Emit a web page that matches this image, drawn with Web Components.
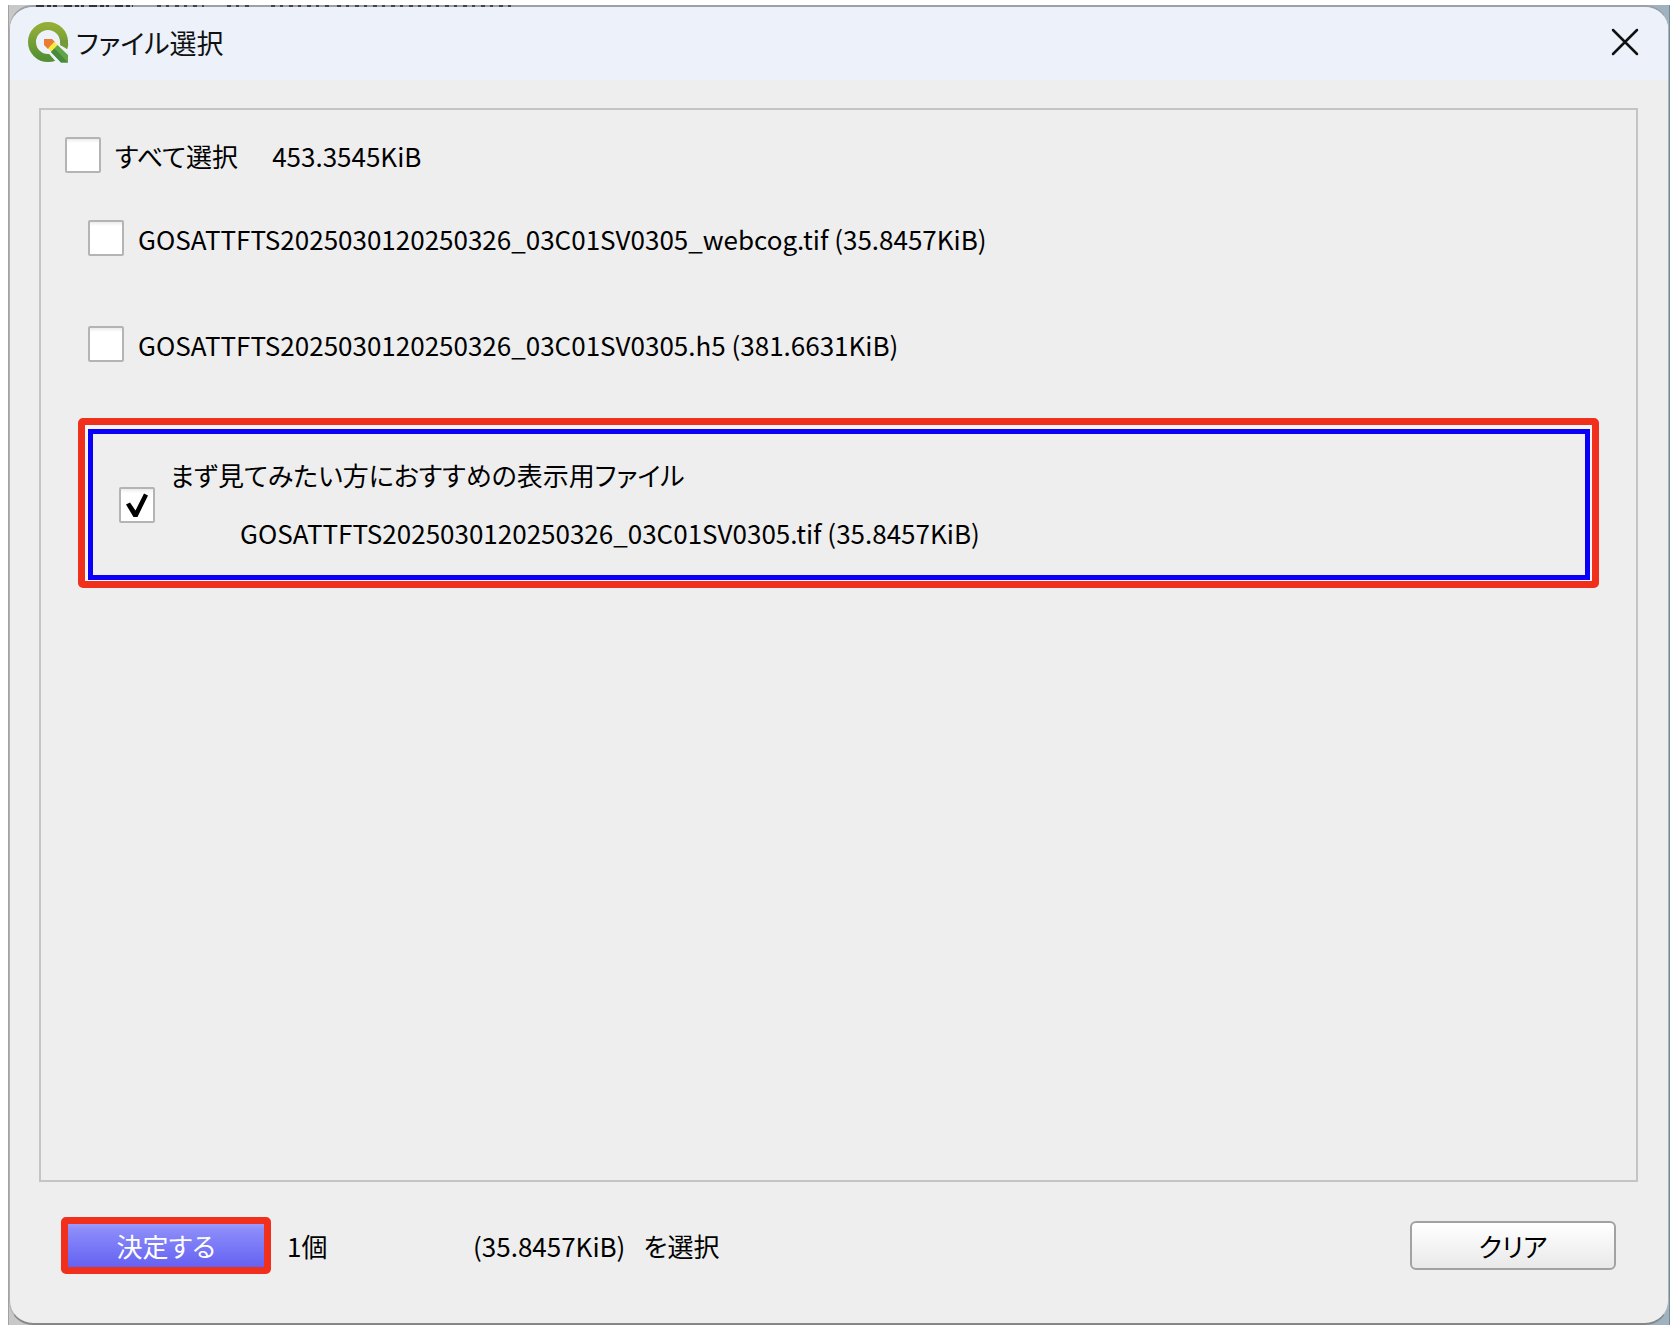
<!DOCTYPE html>
<html lang="ja">
<head>
<meta charset="utf-8">
<title>ファイル選択</title>
<style>
  body {
    margin: 0;
    background: #fff;
    color: #000;
    font-family: "Noto Sans CJK JP", sans-serif;
    font-size: 26px;
    line-height: 36px;
    font-feature-settings: "palt";
  }
</style>
</head>
<body>
<desk-top>
  <dialog-window heading="ファイル選択">
    <file-group>
      <select-all size="453.3545KiB">すべて選択</select-all>
      <file-row>GOSATTFTS2025030120250326_03C01SV0305_webcog.tif (35.8457KiB)</file-row>
      <file-row>GOSATTFTS2025030120250326_03C01SV0305.h5 (381.6631KiB)</file-row>
      <recommended-file>
        まず見てみたい方におすすめの表示用ファイル
        <span slot="file">GOSATTFTS2025030120250326_03C01SV0305.tif (35.8457KiB)</span>
      </recommended-file>
    </file-group>
    <dialog-footer slot="footer" count="1個" size="(35.8457KiB)"></dialog-footer>
  </dialog-window>
</desk-top>

<script>
const define = (name, html, setup) => {
  const template = document.createElement('template');
  template.innerHTML = '<style>*{box-sizing:border-box}:host{box-sizing:border-box}</style>' + html;
  customElements.define(name, class extends HTMLElement {
    connectedCallback() {
      if (this.shadowRoot) return;
      const root = this.attachShadow({ mode: 'open' });
      root.append(template.content.cloneNode(true));
      if (setup) setup(this, root);
    }
  });
};

define('check-box', `
  <style>
    :host { display: block; flex: none; width: 36px; height: 36px; }
    input {
      appearance: none; display: block; margin: 0; width: 36px; height: 36px;
      border: 2px solid #b4b4b4; border-radius: 2px;
      background: linear-gradient(#ececec, #fff 4px);
    }
    .box { display: grid; }
    .box > * { grid-area: 1 / 1; }
    svg { display: none; pointer-events: none; z-index: 1; }
    input:checked + svg { display: block; }
  </style>
  <div class="box">
    <input type="checkbox">
    <svg width="36" height="36" viewBox="0 0 36 36" aria-hidden="true">
      <path d="M7 17.500 11 15.500 16.500 23.500 25 6.500 29 8.500 18.500 30H14.500z"/>
    </svg>
  </div>`,
  (host, root) => {
    const input = root.querySelector('input');
    input.checked = host.hasAttribute('checked');
    input.setAttribute('aria-label', host.getAttribute('label') || '');
  });

define('select-all', `
  <style>
    :host { display: block; padding-left: 24px; margin-bottom: 45px; }
    .row { display: flex; align-items: center; gap: 14px; }
    .texts { display: flex; gap: 34px; padding-top: 2px; }
  </style>
  <div class="row">
    <check-box label="すべて選択"></check-box>
    <div class="texts"><span><slot></slot></span><span id="size"></span></div>
  </div>`,
  (host, root) => { root.getElementById('size').textContent = host.getAttribute('size'); });

define('file-row', `
  <style>
    :host { display: block; padding-left: 47px; margin-bottom: 68px; }
    .row { display: flex; align-items: center; gap: 14px; }
    .text { padding-top: 2px; }
  </style>
  <div class="row">
    <check-box></check-box>
    <span class="text"><slot></slot></span>
  </div>`,
  (host, root) => root.querySelector('check-box').setAttribute('label', host.textContent.trim()));

define('recommended-file', `
  <style>
    :host {
      display: block; margin: -13px 37px 0 37px; padding: 4px 2px 1px 3px;
      border: 7px solid #f0301c; border-radius: 5px; background: #f6f6f8;
    }
    .row {
      display: flex; align-items: center; gap: 15px; height: 151px;
      padding: 0 26px; border: 5px solid #0a00fa; background: #eee;
    }
    .texts { display: flex; flex-direction: column; gap: 22px; padding-bottom: 2px; }
    .file { padding-left: 70px; }
  </style>
  <div class="row">
    <check-box checked label="まず見てみたい方におすすめの表示用ファイル"></check-box>
    <div class="texts">
      <span><slot></slot></span>
      <span class="file"><slot name="file"></slot></span>
    </div>
  </div>`);

define('file-group', `
  <style>
    :host { display: block; flex: 1; border: 2px solid #c4c4c4; padding-top: 26px; }
  </style>
  <slot></slot>`);

define('push-button', `
  <style>
    :host { display: block; }
    button {
      display: block; width: 206px; height: 49px; padding: 0;
      border: 2px solid #a2a2a2; border-radius: 6px;
      background: linear-gradient(#fff, #e9e9e9);
      color: #000; font: inherit; font-feature-settings: inherit;
    }
    :host([primary]) button {
      width: 210px; height: 57px; border: 7px solid #f0301c; border-radius: 5px;
      background: linear-gradient(#9c9cff, #8c8cfa 5px, #6462f2) padding-box;
      color: #fff;
    }
  </style>
  <button type="button"><slot></slot></button>`);

define('dialog-footer', `
  <style>
    :host { display: flex; align-items: center; padding: 0 22px; }
    .count { width: 202px; padding-left: 16px; }
    .note { flex: 1; display: flex; gap: 18px; }
  </style>
  <push-button primary>決定する</push-button>
  <span class="count" id="count"></span>
  <span class="note"><span id="size"></span><span>を選択</span></span>
  <push-button>クリア</push-button>`,
  (host, root) => {
    root.getElementById('count').textContent = host.getAttribute('count');
    root.getElementById('size').textContent = host.getAttribute('size');
  });

define('app-logo', `
  <style>:host { display: block; width: 41px; height: 42px; } svg { display: block; }</style>
  <svg width="41" height="42" viewBox="0 0 41 42" aria-hidden="true">
    <defs><linearGradient id="g" x2="0" y2="1"><stop stop-color="#94ad37"/><stop offset="1" stop-color="#569034"/></linearGradient></defs>
    <circle cx="20" cy="21" r="16" fill="none" stroke="url(#g)" stroke-width="8"/>
    <path d="M16 17 28 18 41 30V42H29L16 27z" fill="#edf1fa"/>
    <path d="M32 24A16 16 0 0 0 32 19L39.900 19A20 20 0 0 1 39.300 28z" fill="#74993a"/>
    <path d="M16 18H24L27 21 20 28 16 24z" fill="#e87c30"/>
    <path d="M26 21 30 24 23 31 20.500 27z" fill="#fbe943"/>
    <path d="M29.500 24 40 34V41.500H33L23 31z" fill="#63a546"/>
    <path d="M23 31 26.500 27.500 40 41.500H33z" fill="#468a3c"/>
  </svg>`);

define('title-bar', `
  <style>
    :host {
      display: flex; align-items: center; height: 73px; padding: 0 29px 4px 18px;
      background: #ecf1fa; font-size: 27px; color: #111;
    }
    h1 { flex: 1; margin: 0; padding: 2px 0 0 7px; font: inherit; }
    button { display: block; padding: 0; border: 0; background: none; }
    svg { display: block; }
  </style>
  <app-logo></app-logo>
  <h1><slot></slot></h1>
  <button type="button" aria-label="閉じる">
    <svg width="28" height="28" viewBox="0 0 28 28"><path d="M2 2 26 26M26 2 2 26" stroke="#111" stroke-width="2.500" stroke-linecap="round"/></svg>
  </button>`);

define('dialog-window', `
  <style>
    :host {
      flex: 1; display: flex; flex-direction: column; overflow: hidden;
      border: solid; border-width: 2px 1px; border-color: #9ba1a5 #a9b6bd #858888 #b0b0b0;
      border-radius: 24px; background: #eee;
    }
    .body { flex: 1; display: flex; flex-direction: column; gap: 35px; padding: 28px 30px 49px 29px; }
  </style>
  <title-bar></title-bar>
  <div class="body"><slot></slot><slot name="footer"></slot></div>`,
  (host, root) => { root.querySelector('title-bar').textContent = host.getAttribute('heading'); });

define('desk-top', `
  <style>
    :host { display: flex; flex-direction: column; min-height: 100vh; padding: 5px 8px 7px; }
    .area {
      flex: 1; display: grid;
      background: linear-gradient(90deg, #c8c8c8 50%, #9eb2bf 50%);
      border-left: 1px solid #a2a2a2; border-right: 1px solid #728a98;
    }
    .area > * { grid-area: 1 / 1; min-width: 0; }
    .window { display: flex; }
    ::slotted(*) { flex: 1; }
    svg { z-index: 1; }
  </style>
  <div class="area">
    <div class="window"><slot></slot></div>
    <svg width="530" height="2" aria-hidden="true">
      <path d="M27 1H48M55 1H75M80 1H100M106 1H124" stroke="#333" stroke-width="2" stroke-dasharray="8 3 4 2"/>
      <path d="M148 1H195M218 1H240M262 1H320M328 1H508" stroke="#444" stroke-width="2" stroke-dasharray="4 5 3 6"/>
    </svg>
  </div>`);
</script>
</body>
</html>
